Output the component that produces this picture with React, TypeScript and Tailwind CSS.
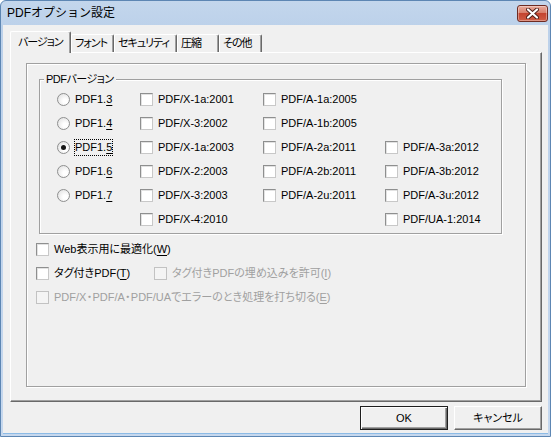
import React from "react";

const font =
  "font-['Liberation_Sans','Noto_Sans_CJK_JP',sans-serif] text-[11px] leading-[13px] [font-feature-settings:'palt']";

const etched = "border border-[#a0a0a0] shadow-[inset_1px_1px_0_#fff,1px_1px_0_#fff]";

const U = ({ children }: { children: React.ReactNode }) => (
  <span className="underline decoration-1 underline-offset-[2px]">{children}</span>
);

// narrow middle dot, as in the dialog font
const Dot = () => <span className="inline-flex w-[6px] justify-center">・</span>;

const Radio = ({ checked = false }: { checked?: boolean }) => (
  <span className="w-[13px] h-[13px] shrink-0 rounded-full border border-[#8e8f8f] bg-[radial-gradient(circle_at_65%_65%,#ffffff_20%,#dcdcdc)] flex items-center justify-center">
    {checked && <span className="w-[5px] h-[5px] rounded-full bg-[#151515]" />}
  </span>
);

const Check = ({ disabled = false }: { disabled?: boolean }) => (
  <span
    className={`w-[13px] h-[13px] shrink-0 border ${
      disabled
        ? "border-[#c2c2c2] bg-[#f4f4f4]"
        : "border-t-[#8e8f8f] border-l-[#8e8f8f] border-r-[#c8c8c8] border-b-[#c8c8c8] bg-white shadow-[inset_1px_1px_0_#e2e2e2]"
    }`}
  />
);

type OptProps = {
  radio?: boolean;
  checked?: boolean;
  focus?: boolean;
  disabled?: boolean;
  children: React.ReactNode;
};

const Opt = ({ radio, checked, focus, disabled, children }: OptProps) => (
  <div className="flex items-center gap-[4px] h-[24px]">
    {radio ? <Radio checked={checked} /> : <Check disabled={disabled} />}
    <span
      className={`border py-px whitespace-nowrap ${
        focus ? "border-dotted border-black" : "border-transparent"
      } ${disabled ? "text-[#a0a0a0]" : "text-black"}`}
    >
      {children}
    </span>
  </div>
);

const Empty = () => <div className="h-[24px]" />;

const Tab = ({ label, active, w }: { label: string; active?: boolean; w: string }) => (
  <div
    className={`${w} shrink-0 whitespace-nowrap tracking-[-1px] flex items-center border-l border-t border-r border-l-white border-t-white border-r-[#696969] shadow-[inset_-1px_0_0_#a0a0a0] rounded-t-[2px] bg-[#f0f0f0] ${
      active ? "h-[22px] -mb-px relative z-10 pl-[7px]" : "h-[18px] pl-[3px]"
    }`}
  >
    {label}
  </div>
);

export default function App() {
  return (
    <div
      className={`w-[551px] h-[437px] flex flex-col border border-[#5d86b3] rounded-t-[6px] bg-[linear-gradient(#c3d6ec,#bcd1ea_6%,#c6d8ee)] ${font}`}
    >
      <div className="h-[24px] shrink-0 flex items-start justify-between pl-[6px] pr-[2px]">
        <span className="mt-[5px] text-[12px] leading-[14px] [font-feature-settings:normal] text-black">
          PDFオプション設定
        </span>
        <button className="mt-[4px] w-[31px] h-[17px] rounded-[3px] border border-[#6e2b22] bg-[linear-gradient(#e9aa9b,#d8806c_45%,#c4442f_50%,#cf5d45)] flex items-center justify-center shadow-[inset_0_0_0_1px_rgba(255,255,255,0.35)]">
          <svg width="13" height="11" viewBox="0 0 13 11">
            <path d="M2 1.5 L11 9.5 M11 1.5 L2 9.5" stroke="#4b1c16" strokeWidth="4" strokeLinecap="round" />
            <path d="M2 1.5 L11 9.5 M11 1.5 L2 9.5" stroke="#ffffff" strokeWidth="2.2" strokeLinecap="round" />
          </svg>
        </button>
      </div>

      <div className="flex-1 mx-[2px] mb-[2px] bg-[#f0f0f0] border-b border-[#8cbbe6] flex flex-col pl-[7px] pr-[6px] pt-[6px]">
        <div className="flex items-end h-[21px]">
          <Tab label="バージョン" active w="w-[61px]" />
          <Tab label="フォント" w="w-[43px]" />
          <Tab label="セキュリティ" w="w-[63px]" />
          <Tab label="圧縮" w="w-[42px]" />
          <Tab label="その他" w="w-[43px]" />
        </div>

        <div className="h-[350px] flex flex-col border border-t-white border-l-white border-r-[#696969] border-b-[#696969] shadow-[inset_-1px_-1px_0_#a0a0a0] pt-[10px] pl-[15px] pr-[15px] pb-[14px]">
          <div className={`flex-1 ${etched} pl-[12px] pt-[15px] flex flex-col`}>
            <div className={`relative w-[463px] h-[155px] ${etched}`}>
              <span className="absolute left-[4px] -top-[7px] bg-[#f0f0f0] px-[2px] tracking-[-0.5px]">PDFバージョン</span>
              <div className="grid grid-cols-[83px_123px_122px_1fr] pl-[17px] pt-[7px]">
                <Opt radio>PDF1.<U>3</U></Opt>
                <Opt>PDF/X-1a:2001</Opt>
                <Opt>PDF/A-1a:2005</Opt>
                <Empty />

                <Opt radio>PDF1.<U>4</U></Opt>
                <Opt>PDF/X-3:2002</Opt>
                <Opt>PDF/A-1b:2005</Opt>
                <Empty />

                <Opt radio checked focus>PDF1.<U>5</U></Opt>
                <Opt>PDF/X-1a:2003</Opt>
                <Opt>PDF/A-2a:2011</Opt>
                <Opt>PDF/A-3a:2012</Opt>

                <Opt radio>PDF1.<U>6</U></Opt>
                <Opt>PDF/X-2:2003</Opt>
                <Opt>PDF/A-2b:2011</Opt>
                <Opt>PDF/A-3b:2012</Opt>

                <Opt radio>PDF1.<U>7</U></Opt>
                <Opt>PDF/X-3:2003</Opt>
                <Opt>PDF/A-2u:2011</Opt>
                <Opt>PDF/A-3u:2012</Opt>

                <Empty />
                <Opt>PDF/X-4:2010</Opt>
                <Empty />
                <Opt>PDF/UA-1:2014</Opt>
              </div>
            </div>

            <div className="mt-[3px] -ml-[3px] flex flex-col">
              <Opt>Web表示用に最適化(<U>W</U>)</Opt>
              <div className="flex">
                <div className="w-[118px]">
                  <Opt>タグ付きPDF(<U>T</U>)</Opt>
                </div>
                <Opt disabled>タグ付きPDFの埋め込みを許可(<U>I</U>)</Opt>
              </div>
              <Opt disabled>
                PDF/X<Dot />PDF/A<Dot />PDF/UAでエラーのとき処理を打ち切る(<U>E</U>)
              </Opt>
            </div>
          </div>
        </div>

        <div className="flex justify-end gap-[6px] mt-[4px]">
          <button className="w-[88px] h-[24px] border border-[#1e1e1e] bg-[#f0f0f0] shadow-[inset_1px_1px_0_#fff,inset_-1px_-1px_0_#696969,inset_-2px_-2px_0_#a0a0a0] text-black">
            OK
          </button>
          <button className="w-[88px] h-[24px] border border-t-white border-l-white border-r-[#696969] border-b-[#696969] bg-[#f0f0f0] shadow-[inset_-1px_-1px_0_#a0a0a0] text-black">
            キャンセル
          </button>
        </div>
      </div>
    </div>
  );
}
